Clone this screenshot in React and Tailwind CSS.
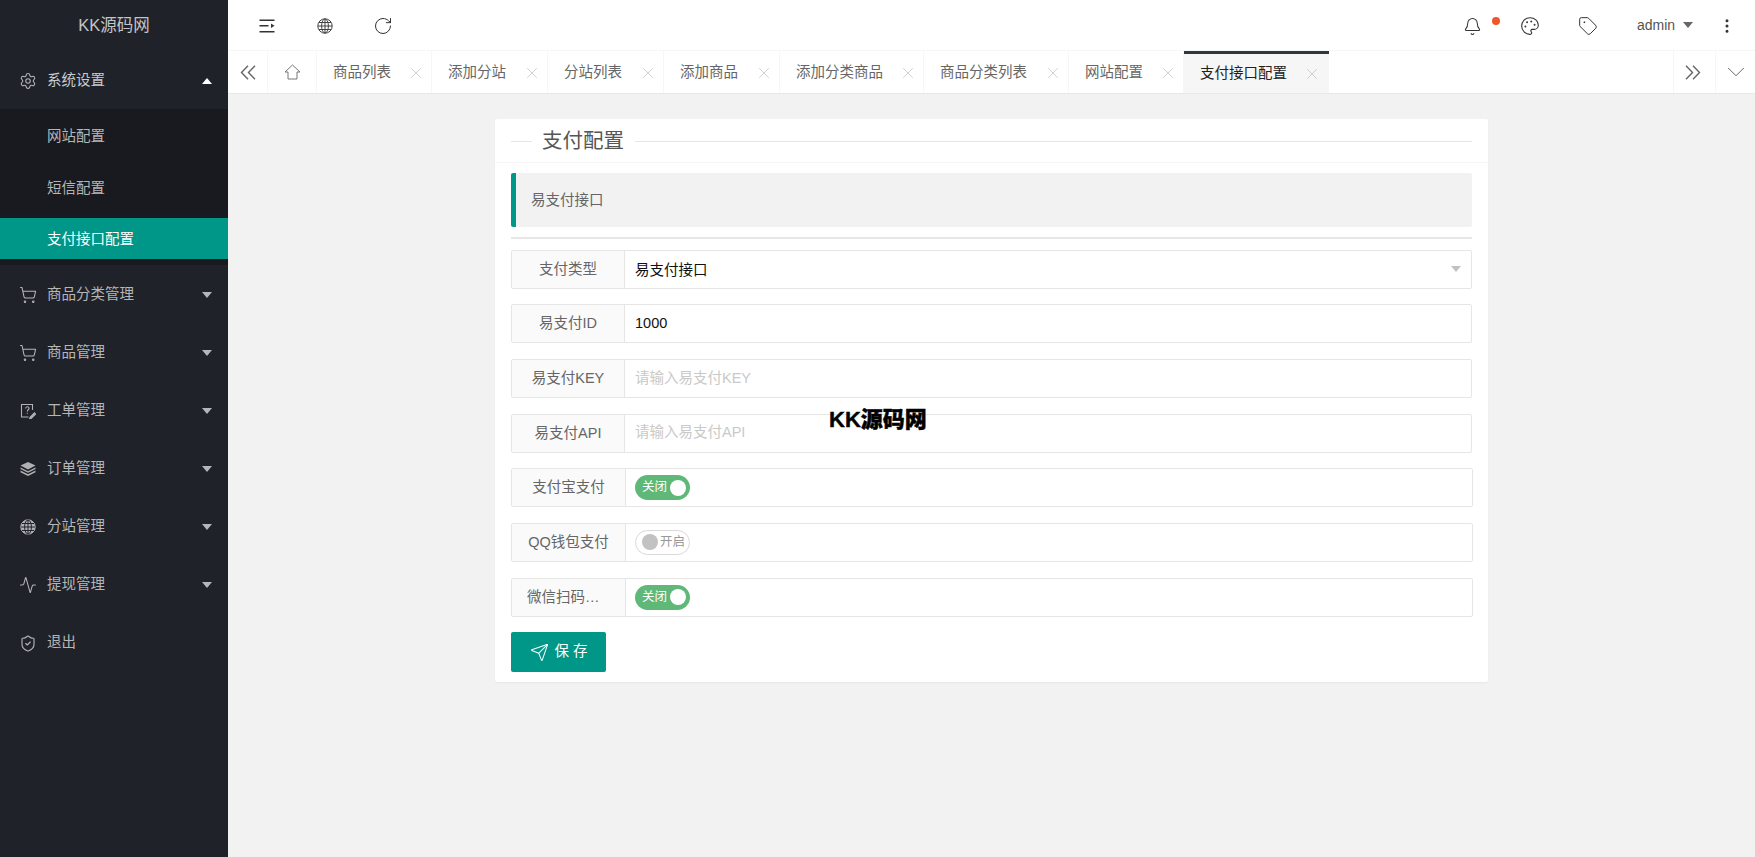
import React from 'react'
import {
  Activity,
  Bell,
  ChevronDown,
  EllipsisVertical,
  Palette,
  RotateCw,
  Send,
  Settings,
  ShieldCheck,
  ShoppingCart,
  Tag,
  X,
} from 'lucide-react'

const font = { fontFamily: '"Liberation Sans", "Noto Sans CJK SC", sans-serif' }

const ShrinkIcon = () => (
  <svg width="16" height="14" viewBox="0 0 16 14" fill="#333">
    <rect x="0.5" y="0.5" width="15" height="1.5" />
    <rect x="0.5" y="6" width="9" height="1.5" />
    <rect x="0.5" y="12" width="15" height="1.5" />
    <path d="M12 4.5 15.5 6.8 12 9z" />
  </svg>
)

const GlobeIcon = ({ color = '#444', filled = false }) => (
  <svg width="16" height="16" viewBox="0 0 16 16" fill={filled ? color : 'none'} stroke={filled ? '#20222a' : color} strokeWidth="1">
    <circle cx="8" cy="8" r="7.2" stroke={color} />
    <ellipse cx="8" cy="8" rx="3.4" ry="7" />
    <path d="M8 1v14M1 8h14M2 4.5h12M2 11.5h12" />
  </svg>
)

const TicketIcon = () => (
  <svg width="16" height="16" viewBox="0 0 16 16" fill="none" stroke="#b0b1b4" strokeWidth="1.1">
    <path d="M12.5 7V1.5h-11v12.5h7" />
    <path d="M5.6 5.6c0-2.4 3.4-2.4 3.4-.2 0 1.4-1.7 1.4-1.7 3M7.3 9.8v1" />
    <path d="m10 14.5 4.4-4.6 1.2 1.2-4.5 4.4-1.6.3z" fill="#b0b1b4" />
  </svg>
)

const LayersIcon = () => (
  <svg width="16" height="16" viewBox="0 0 16 16" fill="#b0b1b4">
    <path d="M8 1 15.5 4.6 8 8.4.5 4.6z" />
    <path d="M.5 6.6 8 10.2l7.5-3.6v1.5L8 11.8.5 8.1z" />
    <path d="M.5 9.6 8 13.2l7.5-3.6v1.6L8 15 .5 11.2z" />
  </svg>
)

const HomeIcon = () => (
  <svg width="17" height="16" viewBox="0 0 17 16" fill="none" stroke="#777" strokeWidth="1">
    <path d="M8.5 1 16 8h-3v7H4V8H1z" />
  </svg>
)

const DoubleChevron = ({ right = false }) => (
  <svg width="16" height="15" viewBox="0 0 16 15" fill="none" stroke="#666" strokeWidth="1.4" className={right ? '-scale-x-100' : ''}>
    <path d="M8 .8 1.5 7.5 8 14.2M15 .8 8.5 7.5 15 14.2" />
  </svg>
)

const Caret = ({ up = false, className = '' }) => (
  <span
    className={`block w-0 h-0 border-l-[5px] border-r-[5px] border-l-transparent border-r-transparent ${
      up ? 'border-b-[6px] border-b-white' : 'border-t-[6px] border-t-[#b5b6b8]'
    } ${className}`}
  />
)

const menu = [
  { name: '商品分类管理', icon: <ShoppingCart size={18} strokeWidth={1.4} /> },
  { name: '商品管理', icon: <ShoppingCart size={18} strokeWidth={1.4} /> },
  { name: '工单管理', icon: <TicketIcon /> },
  { name: '订单管理', icon: <LayersIcon /> },
  { name: '分站管理', icon: <GlobeIcon color="#b0b1b4" filled /> },
  { name: '提现管理', icon: <Activity size={18} strokeWidth={1.4} /> },
  { name: '退出', icon: <ShieldCheck size={19} strokeWidth={1.5} />, noCaret: true },
]

const tabs = [
  { name: '商品列表', w: 'w-[115px]' },
  { name: '添加分站', w: 'w-[116px]' },
  { name: '分站列表', w: 'w-[116px]' },
  { name: '添加商品', w: 'w-[116px]' },
  { name: '添加分类商品', w: 'w-[144px]' },
  { name: '商品分类列表', w: 'w-[145px]' },
  { name: '网站配置', w: 'w-[115px]' },
]

const Switch = ({ on }) =>
  on ? (
    <div className="-ml-[1px] w-[55px] h-[25px] rounded-full bg-[#5fb878] flex items-center justify-between pl-[7px] pr-[4px]">
      <span className="text-[12.5px] text-white">关闭</span>
      <span className="w-[16px] h-[16px] rounded-full bg-white" />
    </div>
  ) : (
    <div className="-ml-[1px] w-[55px] h-[25px] rounded-full border border-[#d9d9d9] bg-white flex items-center pl-[6px] gap-[2px]">
      <span className="w-[16px] h-[16px] rounded-full bg-[#c2c2c2] shrink-0" />
      <span className="text-[12.5px] text-[#999]">开启</span>
    </div>
  )

const Row = ({ label, wide = false, children }) => (
  <div className={`flex h-[39px] border border-[#e6e6e6] rounded-[2px] ${wide ? 'w-[962px]' : 'w-[961px]'}`}>
    <div
      className={`shrink-0 h-full bg-[#fafafa] border-r border-[#e6e6e6] px-[15px] leading-[36px] text-center truncate text-[14.5px] text-[#666] ${
        wide ? 'w-[114px]' : 'w-[113px]'
      }`}
    >
      {label}
    </div>
    <div className="flex-1 flex items-center pl-[10px] pr-[11px] text-[14.5px]">{children}</div>
  </div>
)

const App = () => {
  return (
    <div className="relative flex h-screen overflow-hidden bg-[#f2f2f2]" style={font}>
      <aside className="w-[228px] shrink-0 bg-[#20222a] text-[14.5px] text-[#b5b6b8]">
        <div className="h-[51px] flex items-center justify-center text-[16.5px] text-[#c4c5c7]">KK源码网</div>
        <div className="h-[58px] flex items-center pt-[2px] pl-[19px] pr-[16px]">
          <Settings size={18} strokeWidth={1.4} />
          <span className="ml-[10px] text-[#c9cacc]">系统设置</span>
          <Caret up className="ml-auto" />
        </div>
        <div className="bg-[#191a1f] pt-[1px] pb-[6px]">
          <div className="h-[52px] flex items-center pt-[2px] pl-[47px]">网站配置</div>
          <div className="h-[52px] flex items-center pt-[2px] pl-[47px]">短信配置</div>
          <div className="mt-[4px] h-[41px] flex items-center pt-[2px] pl-[47px] bg-[#009688] text-white">支付接口配置</div>
        </div>
        {menu.map((item) => (
          <div key={item.name} className="h-[58px] flex items-center pt-[2px] pl-[19px] pr-[16px]">
            <span className="w-[18px] flex justify-center">{item.icon}</span>
            <span className="ml-[10px]">{item.name}</span>
            {!item.noCaret && <Caret className="ml-auto" />}
          </div>
        ))}
      </aside>

      <main className="flex-1 min-w-0 flex flex-col">
        <header className="h-[51px] bg-white border-b border-[#f6f6f6] flex items-center pl-[10px] pr-[8px] text-[#333]">
          <div className="w-[58px] flex justify-center pt-[2px]"><ShrinkIcon /></div>
          <div className="w-[58px] flex justify-center pt-[2px]"><GlobeIcon /></div>
          <div className="w-[58px] flex justify-center pt-[2px]"><RotateCw size={20} strokeWidth={1.2} /></div>
          <div className="relative w-[58px] flex justify-center ml-auto pt-[2px]">
            <Bell size={19} strokeWidth={1.3} />
            <span className="absolute left-[49px] top-[2px] w-[8px] h-[8px] rounded-full bg-[#f0562a]" />
          </div>
          <div className="w-[58px] flex justify-center pt-[2px]"><Palette size={20} strokeWidth={1.3} /></div>
          <div className="w-[58px] flex justify-center pt-[2px]"><Tag size={20} strokeWidth={1.2} /></div>
          <div className="w-[89px] flex items-center pl-[20px] text-[14px] text-[#555]">
            admin
            <span className="ml-[8px] w-0 h-0 border-l-[5.5px] border-r-[5.5px] border-t-[6px] border-l-transparent border-r-transparent border-t-[#666]" />
          </div>
          <div className="w-[41px] flex justify-center pt-[2px]"><EllipsisVertical size={18} strokeWidth={2} /></div>
        </header>

        <div className="h-[43px] shrink-0 bg-white border-b border-[#e8e8e8] flex text-[14.5px] text-[#666]">
          <div className="w-[40px] border-r border-[#f6f6f6] flex items-center justify-center">
            <DoubleChevron />
          </div>
          <div className="w-[49px] border-r border-[#f6f6f6] flex items-center justify-center"><HomeIcon /></div>
          {tabs.map((tab) => (
            <div key={tab.name} className={`${tab.w} border-r border-[#f6f6f6] flex items-center justify-between pt-[2px] pl-[16px] pr-[6px]`}>
              <span>{tab.name}</span>
              <X size={18} strokeWidth={0.9} color="#bbb" />
            </div>
          ))}
          <div className="w-[145px] bg-[#f6f6f6] border-t-[3px] border-[#2f363c] flex items-center justify-between pl-[16px] pr-[8px] text-[#222]">
            <span>支付接口配置</span>
            <X size={18} strokeWidth={0.9} color="#bbb" />
          </div>
          <div className="ml-auto w-[42px] border-l border-[#f6f6f6] flex items-center justify-center pr-[4px]">
            <DoubleChevron right />
          </div>
          <div className="w-[40px] border-l border-[#f6f6f6] flex items-center justify-center">
            <ChevronDown size={30} strokeWidth={0.8} color="#666" />
          </div>
        </div>

        <div className="pt-[25px] pl-[267px]">
          <section className="w-[993px] bg-white rounded-[2px] shadow-[0_1px_2px_rgba(0,0,0,0.05)]">
            <div className="h-[44px] border-b border-[#f6f6f6] px-[16px] pt-[2px] flex items-center">
              <span className="w-[21px] h-px bg-[#e6e6e6]" />
              <span className="ml-[10px] text-[20.5px] text-[#555]">支付配置</span>
              <span className="ml-[11px] flex-1 h-px bg-[#e6e6e6]" />
            </div>
            <div className="px-[16px] pt-[10px] pb-[10px]">
              <div className="h-[54px] bg-[#f2f2f2] border-l-[5px] border-[#009688] rounded-[2px] flex items-center pt-[2px] pl-[15px] text-[14.5px] text-[#666]">
                易支付接口
              </div>
              <div className="mt-[10px] mb-[10.5px] h-[2px] bg-[#e6e6e6]" />
              <div className="flex flex-col gap-[15.7px]">
                <Row label="支付类型">
                  <span className="pt-[3px] text-[#111]">易支付接口</span>
                  <span className="ml-auto mr-[-1px] w-0 h-0 border-l-[5px] border-r-[5px] border-t-[6px] border-l-transparent border-r-transparent border-t-[#c2c2c2]" />
                </Row>
                <Row label="易支付ID"><span className="text-[#111]">1000</span></Row>
                <Row label="易支付KEY"><span className="text-[#c9c9c9]">请输入易支付KEY</span></Row>
                <Row label="易支付API"><span className="text-[#c9c9c9]">请输入易支付API</span></Row>
                <Row label="支付宝支付" wide><Switch on /></Row>
                <Row label="QQ钱包支付" wide><Switch /></Row>
                <Row label="微信扫码支付" wide><Switch on /></Row>
              </div>
              <button className="mt-[15.5px] w-[95px] h-[40px] bg-[#009688] rounded-[2px] text-white text-[14.5px] flex items-center justify-center gap-[6px]">
                <Send size={19} strokeWidth={1.3} />
                <span className="tracking-[4px] -mr-[4px]">保存</span>
              </button>
            </div>
          </section>
        </div>
      </main>

      <div className="absolute left-[829px] top-[406px] text-[22px] leading-[28px] font-black text-black [-webkit-text-stroke:0.4px_black]">KK源码网</div>
    </div>
  )
}

export default App
